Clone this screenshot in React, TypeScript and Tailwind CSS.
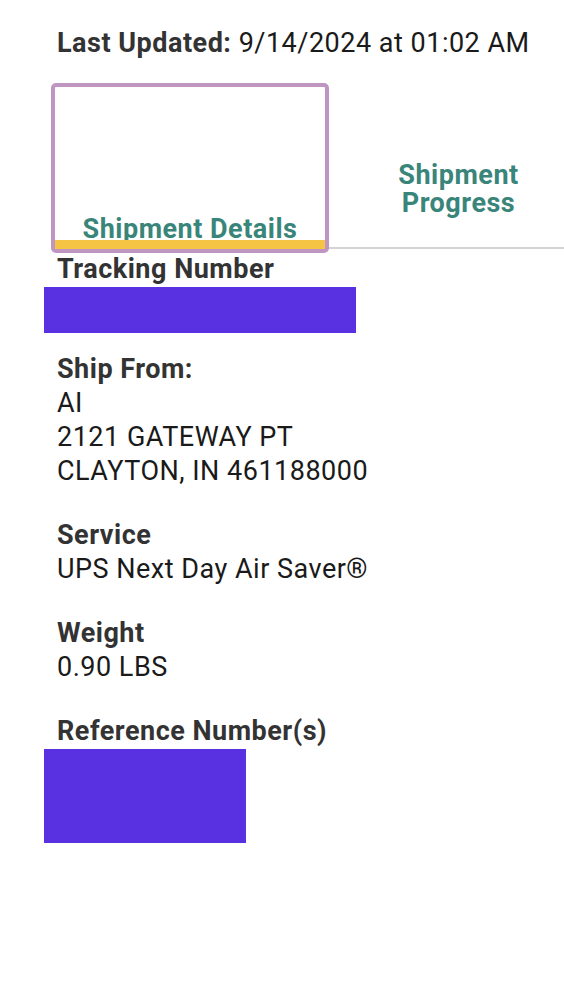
import React from "react";

const font = { fontFamily: "Roboto, 'Liberation Sans', sans-serif" };

function Redact({ w, h }: { w: string; h: string }) {
  return <div className={`bg-[#5a31e1] ${w} ${h}`} />;
}

export default function App() {
  return (
    <div className="w-[564px] min-h-[992px] bg-white tracking-[0.5px]" style={font}>
      <div className="pt-[26px] pl-[57px] text-[27px] leading-[34px] text-[#1a1a1a]">
        <span className="font-bold text-[#333]">Last Updated:</span> 9/14/2024 at 01:02 AM
      </div>
      <div className="mt-[23px] pl-[51px]">
        <div className="flex border-b-2 border-[#d3d3d3] h-[166px]">
          <div className="w-[278px] h-[170px] shrink-0 border-4 border-[#bf95c2] rounded-[5px] flex flex-col justify-end relative z-10">
            <div className="text-center text-[27px] leading-[28px] font-bold text-[#3a857a] mb-[-3px]">Shipment Details</div>
            <div className="h-[9px] bg-[#f5c445]" />
          </div>
          <div className="flex-1 pl-[24px] pt-[78px] flex justify-center">
            <div className="text-center text-[27px] leading-[28px] font-bold text-[#3a857a]">
              <div>Shipment</div>
              <div>Progress</div>
            </div>
          </div>
        </div>
      </div>
      <div className="text-[27px] leading-[34px] text-[#1a1a1a]">
        <div className="pl-[57px] font-bold text-[#333] mt-[3px]">Tracking Number</div>
        <div className="pl-[44px] mt-[1px]">
          <Redact w="w-[312px]" h="h-[46px]" />
        </div>
        <div className="pl-[57px] mt-[19px]">
          <div className="font-bold text-[#333]">Ship From:</div>
          <div>AI</div>
          <div>2121 GATEWAY PT</div>
          <div>CLAYTON, IN 461188000</div>
        </div>
        <div className="pl-[57px] mt-[30px]">
          <div className="font-bold text-[#333]">Service</div>
          <div>UPS Next Day Air Saver®</div>
        </div>
        <div className="pl-[57px] mt-[30px]">
          <div className="font-bold text-[#333]">Weight</div>
          <div>0.90 LBS</div>
        </div>
        <div className="pl-[57px] mt-[30px]">
          <div className="font-bold text-[#333]">Reference Number(s)</div>
        </div>
        <div className="pl-[44px] mt-[1px]">
          <Redact w="w-[202px]" h="h-[94px]" />
        </div>
      </div>
    </div>
  );
}
